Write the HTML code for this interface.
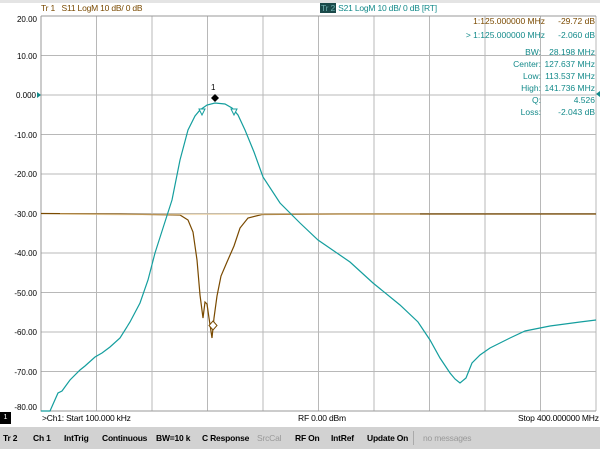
<!DOCTYPE html>
<html><head><style>
body{margin:0;width:600px;height:449px;overflow:hidden;background:#fff;font-family:"Liberation Sans",sans-serif;position:relative}
.t{position:absolute;font-size:8.5px;white-space:nowrap;letter-spacing:-0.2px}
.b{font-weight:bold}
</style></head><body>
<div style="position:absolute;left:0;top:0;width:600px;height:3px;background:#e4e4e4"></div>
<div class="t" style="left:41px;top:3px;color:#7a4a00">Tr 1 &nbsp;&nbsp;S11 LogM 10 dB/ 0 dB</div>
<div class="t" style="left:320px;top:3px;color:#138a8a"><span style="background:#1a4a4a;color:#6fb0b0;padding:0 1px">Tr 2</span> S21 LogM 10 dB/ 0 dB [RT]</div>
<svg width="600" height="449" style="position:absolute;left:0;top:0" font-family="Liberation Sans" font-size="8.5">
<g stroke="#b8b8b8" stroke-width="1">
<path d="M96.5 16V411M152 16V411M207.5 16V411M263 16V411M318.5 16V411M374 16V411M429.5 16V411M485 16V411M540.5 16V411M596 16V411"/>
<path d="M41 55.5H596M41 95H596M41 134.5H596M41 174H596M41 213.5H596M41 253H596M41 292.5H596M41 332H596M41 371.5H596"/>
</g>
<path d="M41 16V411H596M41 16H596" stroke="#999" fill="none"/>
<g fill="#000" text-anchor="end" font-size="8">
<text x="37" y="22">20.00</text><text x="37" y="59">10.00</text><text x="36" y="98">0.000</text>
<text x="37" y="138">-10.00</text><text x="37" y="177">-20.00</text><text x="37" y="217">-30.00</text>
<text x="37" y="256">-40.00</text><text x="37" y="296">-50.00</text><text x="37" y="335">-60.00</text>
<text x="37" y="375">-70.00</text><text x="37" y="410">-80.00</text>
</g>
<path d="M37 92l4 3-4 3z" fill="#138a8a"/>
<path d="M600 91l-4 3 4 3z" fill="#138a8a"/>
<polyline fill="none" stroke="#7a4a00" stroke-width="1.2" points="41,213.5 120,214 180,215 188,220 193,232 197,260 200,295 203,318 205,302 207,304 209,318 212,338 214,318 217,296 221,276 227,262 234,246 240,228 248,218 262,214.5 340,214 596,214"/>
<polyline fill="none" stroke="#e8c890" stroke-width="1.5" opacity="0.6" points="60,214 120,214.5 300,214 420,214"/>
<polyline fill="none" stroke="#149e9e" stroke-width="1.2" points="41,411 50,411 58,393 62,391 70,380 80,370 85,366 95,357 102,353 110,347 120,338 130,322 140,303 148,280 155,253 163,228 172,200 180,160 188,130 195,116 200,110 207,105 215,103 225,104 232,108 238,115 245,130 254,152 263,177 280,203 300,223 318,240 350,262 373,283 400,305 418,322 430,340 440,358 450,373 455,379 460,383 466,378 472,363 480,355 490,348 510,338 525,331 550,326 580,322 596,320"/>
<path d="M215 94l4 4-4 4-4-4z" fill="#000"/>
<text x="211" y="90" font-size="8">1</text>
<path d="M199 109l6 0-3 6z" fill="#fff" stroke="#149e9e"/>
<path d="M231 109l6 0-3 6z" fill="#fff" stroke="#149e9e"/>
<path d="M213 321l4 4.5-4 4.5-4-4.5z" fill="#fff" stroke="#7a4a00"/>
<g text-anchor="end">
<text x="545" y="24" fill="#7a4a00">1:125.000000 MHz</text><text x="595" y="24" fill="#7a4a00">-29.72 dB</text>
<text x="545" y="38" fill="#138a8a">&gt; 1:125.000000 MHz</text><text x="595" y="38" fill="#138a8a">-2.060 dB</text>
<g fill="#138a8a">
<text x="541" y="55">BW:</text><text x="595" y="55">28.198 MHz</text>
<text x="541" y="67">Center:</text><text x="595" y="67">127.637 MHz</text>
<text x="541" y="79">Low:</text><text x="595" y="79">113.537 MHz</text>
<text x="541" y="91">High:</text><text x="595" y="91">141.736 MHz</text>
<text x="541" y="103">Q:</text><text x="595" y="103">4.526</text>
<text x="541" y="115">Loss:</text><text x="595" y="115">-2.043 dB</text>
</g></g>
</svg>
<div style="position:absolute;left:0;top:412px;width:11px;height:12px;background:#000;color:#fff;font-size:7px;text-align:center;line-height:12px">1</div>
<div class="t" style="left:42px;top:413px">&gt;Ch1: Start 100.000 kHz</div>
<div class="t" style="left:298px;top:413px">RF 0.00 dBm</div>
<div class="t" style="left:518px;top:413px">Stop 400.000000 MHz</div>
<div style="position:absolute;left:0;top:427px;width:600px;height:22px;background:#d2d2d2"></div>
<div class="t b" style="left:3px;top:433px">Tr 2</div>
<div class="t b" style="left:33px;top:433px">Ch 1</div>
<div class="t b" style="left:64px;top:433px">IntTrig</div>
<div class="t b" style="left:102px;top:433px">Continuous</div>
<div class="t b" style="left:156px;top:433px">BW=10 k</div>
<div class="t b" style="left:202px;top:433px">C Response</div>
<div class="t" style="left:257px;top:433px;color:#999">SrcCal</div>
<div class="t b" style="left:295px;top:433px">RF On</div>
<div class="t b" style="left:331px;top:433px">IntRef</div>
<div class="t b" style="left:367px;top:433px">Update On</div>
<div style="position:absolute;left:413px;top:431px;width:1px;height:14px;background:#aaa"></div>
<div class="t" style="left:423px;top:433px;color:#999">no messages</div>
</body></html>
